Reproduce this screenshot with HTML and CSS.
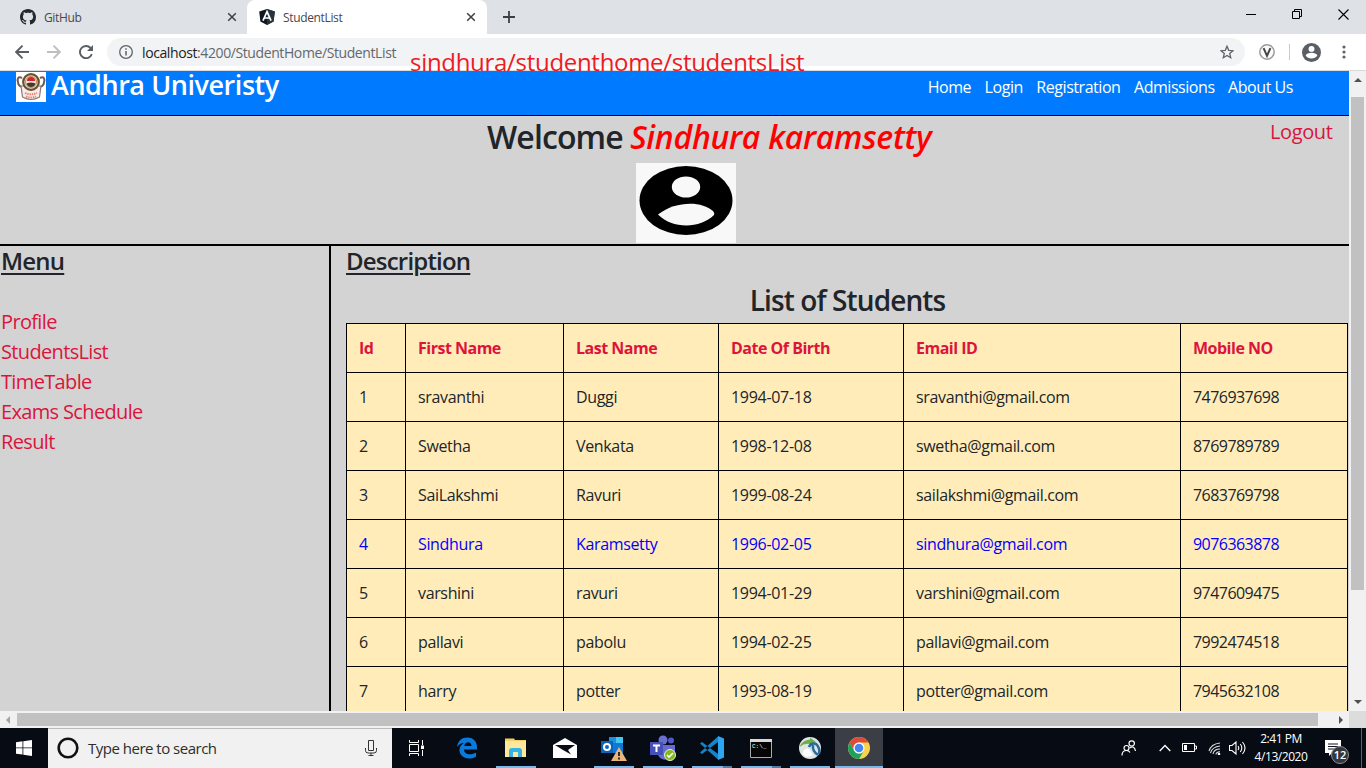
FILE: index.html
```html
<!DOCTYPE html>
<html lang="en">
<head>
<meta charset="utf-8">
<title>StudentList</title>
<link rel="stylesheet" href="styles.css">
</head>
<body>
<div class="screen">
  <header class="tabstrip">
    <div class="tab">
      <svg class="tab-icon" viewBox="0 0 16 16" width="16" height="16"><path fill="#24292e" d="M8 0C3.58 0 0 3.58 0 8c0 3.54 2.29 6.53 5.47 7.59.4.07.55-.17.55-.38 0-.19-.01-.82-.01-1.49-2.01.37-2.53-.49-2.69-.94-.09-.23-.48-.94-.82-1.13-.28-.15-.68-.52-.01-.53.63-.01 1.08.58 1.23.82.72 1.21 1.87.87 2.33.66.07-.52.28-.87.51-1.07-1.78-.2-3.64-.89-3.64-3.95 0-.87.31-1.59.82-2.15-.08-.2-.36-1.02.08-2.12 0 0 .67-.21 2.2.82.64-.18 1.32-.27 2-.27s1.36.09 2 .27c1.53-1.04 2.2-.82 2.2-.82.44 1.1.16 1.92.08 2.12.51.56.82 1.27.82 2.15 0 3.07-1.87 3.75-3.65 3.95.29.25.54.73.54 1.48 0 1.07-.01 1.93-.01 2.2 0 .21.15.46.55.38A8.01 8.01 0 0 0 16 8c0-4.42-3.58-8-8-8z"/></svg>
      <span class="tab-title">GitHub</span>
      <svg class="tab-close" viewBox="0 0 10 10" width="10" height="10"><path d="M1.2 1.2l7.6 7.6M8.8 1.2L1.2 8.8" stroke="#3c4043" stroke-width="1.5"/></svg>
    </div>
    <div class="tab active">
      <svg class="tab-icon" viewBox="0 0 16 16" width="16" height="16"><path fill="#0e1721" d="M8 0l7.8 2.6-1.2 10L8 16l-6.6-3.4-1.2-10z"/><path fill="#29333d" d="M8 0l7.8 2.6-1.2 10L8 16z"/><path d="M4 11.7L8 2.600l4 9.100M5.600 9h4.800" fill="none" stroke="#fff" stroke-width="1.700"/></svg>
      <span class="tab-title">StudentList</span>
      <svg class="tab-close" viewBox="0 0 10 10" width="10" height="10"><path d="M1.200 1.200l7.600 7.600M8.800 1.200L1.200 8.800" stroke="#3c4043" stroke-width="1.500"/></svg>
    </div>
    <svg class="newtab" viewBox="0 0 12 12" width="12" height="12"><path d="M6 0v12M0 6h12" stroke="#3c4043" stroke-width="1.800"/></svg>
    <div class="winbtns">
      <svg viewBox="0 0 11 11" width="11" height="11"><path d="M0 5.500h10" stroke="#000"/></svg>
      <svg viewBox="0 0 11 11" width="11" height="11"><path d="M.5 2.500h7v7h-7zM2.500 2.500v-2h7v7h-2" fill="none" stroke="#000"/></svg>
      <svg viewBox="0 0 11 11" width="11" height="11"><path d="M.5.5l10 10M10.500.5l-10 10" stroke="#000" stroke-width="1.100"/></svg>
    </div>
  </header>
  <div class="toolbar">
    <svg class="nav-back" viewBox="0 0 14 14" width="14" height="14"><path d="M14 7H1.500M7.500.7L1.200 7l6.300 6.300" fill="none" stroke="#5a5d61" stroke-width="1.900"/></svg>
    <svg class="nav-fwd" viewBox="0 0 14 14" width="14" height="14"><path d="M0 7h12.500M6.500.7L12.800 7l-6.300 6.300" fill="none" stroke="#bdbfc1" stroke-width="1.900"/></svg>
    <svg class="nav-reload" viewBox="0 0 14 14" width="14" height="14"><path d="M12.800 9.200A6.100 6.100 0 1 1 11.600 3" fill="none" stroke="#5a5d61" stroke-width="1.900"/><path d="M14 0v6H8z" fill="#5a5d61"/></svg>
    <div class="omnibox">
      <svg viewBox="0 0 14 14" width="14" height="14"><circle cx="7" cy="7" r="6.300" fill="none" stroke="#5f6368" stroke-width="1.300"/><path d="M7 6v4.500M7 3.300v1.500" stroke="#5f6368" stroke-width="1.500"/></svg>
      <span class="url"><b>localhost</b>:4200/StudentHome/StudentList</span>
      <svg class="star" viewBox="0 0 14 14" width="14" height="14"><path d="M7 1.300l1.700 4 4.300.4-3.300 2.800 1 4.200L7 10.500l-3.700 2.200 1-4.200L1 5.700l4.300-.4z" fill="none" stroke="#5f6368" stroke-width="1.300"/></svg>
    </div>
    <svg class="ext" viewBox="0 0 16 16" width="16" height="16"><circle cx="8" cy="8" r="7.200" fill="#fafafa" stroke="#9b9b9b" stroke-width="1.500"/><path d="M4.600 4.200L8 11.800l3.400-7.600" fill="none" stroke="#444" stroke-width="2"/></svg>
    <i class="sep"></i>
    <svg class="avatar" viewBox="0 0 20 20" width="19" height="19"><circle cx="10" cy="10" r="10" fill="#5a5f66"/><circle cx="10" cy="6.200" r="3.100" fill="#fff"/><path d="M3.800 13.200c1.500-3.800 10.900-3.800 12.400 0-2.400 4.200-10 4.200-12.400 0z" fill="#fff"/></svg>
    <svg class="dots" viewBox="0 0 4 14" width="4" height="14"><g fill="#5f6368"><circle cx="2" cy="2" r="1.600"/><circle cx="2" cy="7" r="1.600"/><circle cx="2" cy="12" r="1.600"/></g></svg>
    <div class="note">sindhura/studenthome/studentsList</div>
  </div>

  <div class="viewport">
    <div class="page">
      <nav class="navbar">
        <svg class="crest" viewBox="0 0 30 30" width="30" height="30"><rect width="30" height="30" fill="#fff"/><path d="M6 6C2 4 1 7 2 10c0 3 1 4 4 5M24 6c4-2 5 1 4 4 0 3-1 4-4 5" fill="none" stroke="#755a54" stroke-width="2"/><path d="M5 14l1.500 11Q15 30 23.500 25L25 14z" fill="#f5eceb" stroke="#8b7b78" stroke-width="1.200"/><circle cx="15" cy="10" r="7.800" fill="#efe2cf" stroke="#6b5030" stroke-width="2.200"/><circle cx="15" cy="10" r="5.500" fill="#f4e6e0" stroke="#b09050" stroke-width="1"/><path d="M11 9a4 4 0 0 1 8 0z" fill="#d8232a"/><path d="M10.500 11.500q4.500-2 9 0-1 3.500-4.500 3.500t-4.500-3.500z" fill="#4a3533"/><path d="M9 21q6 2.500 12 0M10 24.500q5 2 10 0" fill="none" stroke="#f08373" stroke-width="2" stroke-dasharray="1.500 .8"/></svg>
        <span class="brand">Andhra Univeristy</span>
        <div class="links"><a>Home</a><a>Login</a><a>Registration</a><a>Admissions</a><a>About Us</a></div>
      </nav>
      <section class="welcome">
        <h2 class="hello"><span class="greet">Welcome </span><em>Sindhura karamsetty</em></h2>
        <svg class="portrait" viewBox="0 0 100 80" width="100" height="80"><rect width="100" height="80" fill="#f8f8f8"/><ellipse cx="50" cy="37.500" rx="46.500" ry="34.500" fill="#000"/><ellipse cx="50" cy="24" rx="14.200" ry="10.500" fill="#f8f8f8"/><path d="M22 51.500C40 37.500 66 38 77 48q2 2 1 4C64 66 36 66 22 51.500z" fill="#f8f8f8"/></svg>
        <a class="logout">Logout</a>
      </section>
      <div class="columns">
        <aside class="menu">
          <h4>Menu</h4>
          <a>Profile</a><a>StudentsList</a><a>TimeTable</a><a>Exams Schedule</a><a>Result</a>
        </aside>
        <main class="content">
          <h4>Description</h4>
          <h3>List of Students</h3>
          <table>
            <colgroup><col class="c1"><col class="c2"><col class="c3"><col class="c4"><col class="c5"><col class="c6"></colgroup>
            <tr><th>Id</th><th>First Name</th><th>Last Name</th><th>Date Of Birth</th><th>Email ID</th><th>Mobile NO</th></tr>
            <tr><td>1</td><td>sravanthi</td><td>Duggi</td><td>1994-07-18</td><td>sravanthi@gmail.com</td><td>7476937698</td></tr>
            <tr><td>2</td><td>Swetha</td><td>Venkata</td><td>1998-12-08</td><td>swetha@gmail.com</td><td>8769789789</td></tr>
            <tr><td>3</td><td>SaiLakshmi</td><td>Ravuri</td><td>1999-08-24</td><td>sailakshmi@gmail.com</td><td>7683769798</td></tr>
            <tr class="me"><td>4</td><td>Sindhura</td><td>Karamsetty</td><td>1996-02-05</td><td>sindhura@gmail.com</td><td>9076363878</td></tr>
            <tr><td>5</td><td>varshini</td><td>ravuri</td><td>1994-01-29</td><td>varshini@gmail.com</td><td>9747609475</td></tr>
            <tr><td>6</td><td>pallavi</td><td>pabolu</td><td>1994-02-25</td><td>pallavi@gmail.com</td><td>7992474518</td></tr>
            <tr><td>7</td><td>harry</td><td>potter</td><td>1993-08-19</td><td>potter@gmail.com</td><td>7945632108</td></tr>
          </table>
        </main>
      </div>
    </div>
    <div class="vscroll">
      <svg viewBox="0 0 8 4" width="8" height="4"><path d="M0 4l4-4 4 4z" fill="#505050"/></svg>
      <i class="vthumb"></i>
      <svg class="down" viewBox="0 0 8 4" width="8" height="4"><path d="M0 0l4 4 4-4z" fill="#505050"/></svg>
    </div>
    <div class="hscroll">
      <svg viewBox="0 0 4 8" width="4" height="8"><path d="M4 0L0 4l4 4z" fill="#a3a3a3"/></svg>
      <i class="hthumb"></i>
      <svg class="right" viewBox="0 0 4 8" width="4" height="8"><path d="M0 0l4 4-4 4z" fill="#505050"/></svg>
    </div>
    <div class="corner"></div>
  </div>

  <footer class="taskbar">
    <div class="start"><svg viewBox="0 0 16 16" width="16" height="16"><path fill="#fff" d="M0 2.200L6.500 1.300V7.500H0zM7.300 1.200L16 0v7.500H7.300zM0 8.300h6.500v6.300L0 13.700zM7.300 8.300H16V16l-8.700-1.200z"/></svg></div>
    <div class="search">
      <svg viewBox="0 0 22 22" width="22" height="22"><circle cx="11" cy="11" r="9.300" fill="none" stroke="#111" stroke-width="2.600"/></svg>
      <span>Type here to search</span>
      <svg class="mic" viewBox="0 0 12 16" width="12" height="16"><path d="M3.500.5h5v10h-5zM.5 8v2.500q0 2.500 2.500 2.500h6q2.500 0 2.500-2.500V8M6 13v2.500M3.500 15.500h5" fill="none" stroke="#333"/></svg>
    </div>
    <div class="apps">
      <div class="app first"><svg viewBox="0 0 18 18" width="18" height="18"><path d="M2.500 1v2.500h9V1M2.500 17v-2.500h9V17M2.500 5.500h9v7h-9zM15.500 1v5M15.500 11v6" fill="none" stroke="#fff"/><path d="M14 6.500h3v3.500h-3z" fill="#fff"/></svg></div>
      <div class="app"><svg viewBox="0 0 24 24" width="24" height="24"><path d="M2 11C3 4.500 7 1.500 12.300 1.500c6.500 0 9.700 4.500 9.700 9.500v2.500H9c.2 5.500 7.500 6 12 3v4.200C12 25.500 4 20.500 4.500 13.500c.2-3 2-5.200 4.500-6.500C5.500 7 3.500 9 2 11zM9.200 10h7.300c0-5-6.500-5-7.300 0z" fill="#0a7bdc"/></svg></div>
      <div class="app run"><svg viewBox="0 0 24 24" width="24" height="24"><path d="M1 4V2.500h9L11 4h11v17H1z" fill="#f6cf63"/><path d="M1 5h21v16H1z" fill="#ffe79b"/><path d="M5 21v-6q0-3 3-3h7q3 0 3 3v6h-4v-5H9v5z" fill="#35b3e8"/></svg></div>
      <div class="app"><svg viewBox="0 0 26 24" width="26" height="24"><path d="M1 9L13 2l12 7v13H1z" fill="#fff"/><path d="M3 9h20l-7 5 3 4.500L11 14z" fill="#080d15"/></svg></div>
      <div class="app run"><svg viewBox="0 0 28 26" width="28" height="26"><path d="M9 2h14v16H9z" fill="#0f78d4"/><path d="M16 2h7v6h-7z" fill="#46c6f3"/><path d="M9 2h7v6H9z" fill="#1a91df"/><path d="M1 6h12v12H1z" fill="#0a65b8"/><circle cx="7" cy="12" r="3" fill="none" stroke="#fff" stroke-width="2"/><path d="M19 12l8 14H11z" fill="#e8b57c"/><path d="M19 17v4M19 22.500v2" stroke="#332b22" stroke-width="2"/></svg></div>
      <div class="app run"><svg viewBox="0 0 28 26" width="28" height="26"><circle cx="14" cy="5" r="4.500" fill="#6b70cf"/><circle cx="22" cy="5.500" r="3" fill="#5059c9"/><path d="M9 10h17v8q-2 6-6 5-3 3-7 1-4-2-4-6z" fill="#656bd0"/><path d="M1 7h13v13H1z" fill="#4550b9"/><path d="M4 10.500h7M7.500 10.500V17" stroke="#fff" stroke-width="2"/><circle cx="21" cy="20" r="5.500" fill="#83b91c" stroke="#e5efd0"/><path d="M18 20l2 2 4-4" fill="none" stroke="#fff" stroke-width="1.700"/></svg></div>
      <div class="app run double"><svg viewBox="0 0 24 24" width="24" height="24"><path d="M0 7.500l2-1.500L18 18v5.500zM0 16.500L2 18 18 6V.500z" fill="#1684c9"/><path d="M18 0l6 2.500v19L18 24z" fill="#2ba6ef"/></svg></div>
      <div class="app run double"><svg viewBox="0 0 24 24" width="24" height="24"><path d="M1.500 3.500h21v18h-21z" fill="#050505" stroke="#aaa"/><path d="M1 3h22v3H1z" fill="#d9d9d9"/><text x="3" y="12" class="prompt">C:\_</text></svg></div>
      <div class="app run"><svg viewBox="0 0 24 24" width="24" height="24"><circle cx="12" cy="12" r="11" fill="#e1e4e3"/><path d="M1.500 11Q4 4 12 3.500V1.500L18 6l-6 4.500V8Q6 7 1.500 11z" fill="#6cae4b"/><path d="M11 11Q13 6 18 8q4.500 4 3 10M15 9q-1 6 5 10" fill="none" stroke="#276b9f" stroke-width="2.500"/><path d="M4 18q3-7 7-5l4 6-6 2z" fill="#fff"/></svg></div>
      <div class="app run current"><svg viewBox="0 0 24 24" width="24" height="24"><circle cx="12" cy="12" r="11" fill="#f9d34b"/><path d="M2.500 6.500A11 11 0 0 1 21.500 6.500H12A5.500 5.500 0 0 0 7.200 14.700z" fill="#dc4b3e"/><path d="M2.500 6.500A11 11 0 0 0 12 23l4.800-8.300A5.500 5.500 0 0 1 7.200 14.700z" fill="#1ba261"/><circle cx="12" cy="12" r="5.500" fill="#fff"/><circle cx="12" cy="12" r="4.300" fill="#4285f4"/></svg></div>
    </div>
    <div class="tray">
      <svg viewBox="0 0 16 16" width="16" height="16"><g fill="none" stroke="#fff" stroke-width="1.200"><circle cx="5.500" cy="8" r="2.500"/><circle cx="10.700" cy="3.500" r="2.700"/><path d="M1 15.500q0-5 4.500-5 2.500 0 3.500 2M8.500 8q5-3 6 3"/></g></svg>
      <svg class="chev" viewBox="0 0 12 8" width="12" height="8"><path d="M.7 7L6 1.500 11.300 7" fill="none" stroke="#fff" stroke-width="1.300"/></svg>
      <svg class="batt" viewBox="0 0 15 10" width="15" height="10"><path d="M.5.5h12v8H.500zM13 3h1.500v3H13" fill="none" stroke="#fff"/><path d="M2 2h3v5H2z" fill="#fff"/></svg>
      <svg class="wifi" viewBox="0 0 13 13" width="13" height="13"><g fill="none" stroke="#ddd" stroke-width="1.100"><path d="M1 9Q3 2 12 1M2.500 11Q4 5 12 4M5 12q1-5 7-5M8 12.500Q8 10 12 9.700"/></g><circle cx="11" cy="12" r="1.300" fill="#fff"/></svg>
      <svg class="vol" viewBox="0 0 17 14" width="17" height="14"><path d="M.5 4.500H3l4-3.500v12L3 9.500H.500zM9 5q1.500 2 0 4M11.300 3q3 4 0 8M13.500 1q5 6 0 12" fill="none" stroke="#fff" stroke-width="1.100"/></svg>
      <div class="clock"><span>2:41 PM</span><span class="date">4/13/2020</span></div>
      <div class="action"><svg viewBox="0 0 16 16" width="16" height="16"><path d="M0 0h16v13H7l-3 3v-3H0z" fill="#fff"/><path d="M3 4h10M3 6.500h10M3 9h7" stroke="#101520"/></svg><span class="badge">12</span></div>
      <i class="peek"></i>
    </div>
  </footer>
</div>
</body>
</html>
```
FILE: styles.css
```css
* { box-sizing: border-box; }
body { margin: 0; font-family: "Open Sans", "Noto Sans", sans-serif; color: #212529; overflow: hidden; }
svg { display: block; flex: none; }
.screen { width: 1366px; height: 768px; display: flex; flex-direction: column; overflow: hidden; background: #fff; }

.tabstrip { height: 34px; flex: none; display: flex; background: #dee1e6; }
.tab { display: flex; align-items: center; height: 34px; width: 247px; padding: 0 10px 0 20px; }
.tab.active { width: 240px; background: #fff; border-radius: 8px 8px 0 0; padding-left: 12px; padding-right: 11px; }
.tab-title { margin-left: 8px; font-size: 12px; color: #45494d; flex: 1; letter-spacing: -.35px; white-space: nowrap; }
.newtab { margin: 11px 0 0 16px; }
.winbtns { margin-left: auto; display: flex; gap: 35px; padding: 9px 17px 0 0; }

.toolbar { height: 37px; flex: none; display: flex; align-items: center; background: #fff; border-bottom: 1px solid #d9dadc; position: relative; padding-left: 15px; }
.nav-fwd { margin-left: 18px; }
.nav-reload { margin-left: 18px; }
.omnibox { display: flex; align-items: center; width: 1138px; height: 28px; border-radius: 14px; background: #f1f3f4; margin-left: 14px; padding: 0 11px 0 12px; }
.url { font-size: 14px; margin-left: 9px; color: #64686d; letter-spacing: -.4px; white-space: nowrap; }
.url b { font-weight: 400; color: #202124; }
.star { margin-left: auto; }
.ext { margin-left: 14px; }
.sep { width: 1px; height: 16px; background: #ccc; margin-left: 14px; }
.avatar { margin-left: 12px; }
.dots { margin-left: 21px; }
.note { position: absolute; left: 410px; top: 10px; height: 27px; width: 410px; font-size: 24px; line-height: 36px; color: #ed1c24; letter-spacing: -.3px; white-space: nowrap; }

.viewport { height: 657px; flex: none; display: grid; grid-template: 640px 17px / 1349px 17px; }
.page { background: #d3d3d3; }
.navbar { height: 45px; background: #007bff; border-bottom: 1px solid #000; display: flex; padding-left: 16px; color: #fff; }
.crest { margin-top: 1px; }
.brand { font-size: 27px; line-height: 27px; font-weight: 600; margin-left: 5px; letter-spacing: -.45px; white-space: nowrap; }
.links { margin-left: auto; margin-right: 56px; display: flex; gap: 13.5px; font-size: 16px; line-height: 33px; letter-spacing: -.45px; white-space: nowrap; }
.welcome { height: 130px; border-bottom: 2px solid #000; position: relative; display: flex; flex-direction: column; }
.hello { margin: 0 0 0 487px; height: 47px; font-size: 32px; line-height: 41px; font-weight: 600; white-space: nowrap; }
.greet { letter-spacing: -.9px; }
.hello em { color: red; letter-spacing: -.3px; }
.portrait { margin-left: 636px; }
.logout { position: absolute; left: 1270px; top: 0; font-size: 20px; line-height: 32px; color: #dc143c; letter-spacing: -.4px; }
.columns { display: flex; height: 465px; }
.menu { width: 331px; border-right: 2px solid #000; padding-left: 1px; display: flex; flex-direction: column; font-size: 20px; line-height: 30px; color: #dc143c; letter-spacing: -.65px; }
h4 { margin: 0; font-size: 24px; line-height: 30px; font-weight: 600; color: #212529; text-decoration: underline; letter-spacing: -.8px; text-underline-offset: 3px; text-decoration-thickness: 2px; }
.menu h4 { margin-bottom: 31px; }
.content { padding-left: 15px; width: 1018px; }
h3 { margin: 0; height: 47px; font-size: 28px; line-height: 48px; font-weight: 600; text-align: center; letter-spacing: -.9px; }
table { border-collapse: collapse; table-layout: fixed; width: 1002px; background: #ffecb9; font-size: 16px; line-height: 24px; letter-spacing: -.35px; }
th, td { border: 1px solid #000; padding: 12px; height: 49px; text-align: left; white-space: nowrap; }
th { color: #dc143c; font-weight: 700; letter-spacing: -.5px; }
td:nth-child(4) { letter-spacing: -.3px; }
td:nth-child(6) { letter-spacing: -.55px; }
.me { color: #00f; }
.c1 { width: 59px; } .c2 { width: 158px; } .c3 { width: 155px; } .c4 { width: 185px; } .c5 { width: 277px; } .c6 { width: 167px; }

.vscroll { background: #f1f1f1; display: flex; flex-direction: column; align-items: center; padding-top: 7px; }
.vthumb { width: 13px; height: 493px; margin-top: 15px; background: #c1c1c1; }
.down { margin-top: auto; margin-bottom: 7px; }
.hscroll { background: #f1f1f1; display: flex; align-items: center; padding-left: 6px; z-index: 1; }
.hthumb { width: 1301px; height: 13px; margin-left: 7px; background: #c1c1c1; }
.right { margin-left: auto; margin-right: 6px; }
.corner { background: #dcdcdc; }

.taskbar { height: 40px; flex: none; display: flex; background: #070c14; }
.start { width: 48px; padding: 12px 16px; }
.search { width: 344px; background: #f1f1f1; border-top: 1px solid #bbb; display: flex; align-items: center; padding: 0 15px 1px 9px; font-size: 15px; color: #2d2d2d; }
.search span { margin-left: 9px; letter-spacing: -.5px; white-space: nowrap; }
.mic { margin-left: auto; }
.apps { display: flex; gap: 1px; padding-left: 2px; }
.app { width: 48px; height: 40px; display: flex; align-items: center; justify-content: center; position: relative; }
.first { padding-right: 5px; }
.run::after { content: ""; position: absolute; left: 4px; right: 4px; bottom: 0; height: 2px; background: #76b9ed; }
.double::after { background: linear-gradient(90deg, #76b9ed 31px, #4f7fa5 31px); }
.current { background: #3b3e45; }
.current::after { left: 0; right: 0; }
.prompt { font: 6px "Liberation Mono", monospace; fill: #fff; }
.tray { margin-left: auto; display: flex; align-items: center; color: #fff; }
.chev { margin-left: 22px; }
.batt { margin-left: 11px; }
.wifi { margin-left: 11px; }
.vol { margin-left: 8px; }
.clock { display: flex; flex-direction: column; align-items: center; width: 54px; margin-left: 8px; font-size: 12px; line-height: 18px; letter-spacing: -.45px; white-space: nowrap; }
.action { position: relative; margin-left: 17px; }
.badge { position: absolute; left: 6px; top: 6px; width: 18px; height: 18px; border-radius: 9px; background: #34373c; border: 1px solid #8b8d90; font-size: 11px; line-height: 16px; text-align: center; font-weight: 600; }
.peek { width: 1px; height: 40px; background: #5c5f64; margin-left: 20px; margin-right: 4px; }
```
